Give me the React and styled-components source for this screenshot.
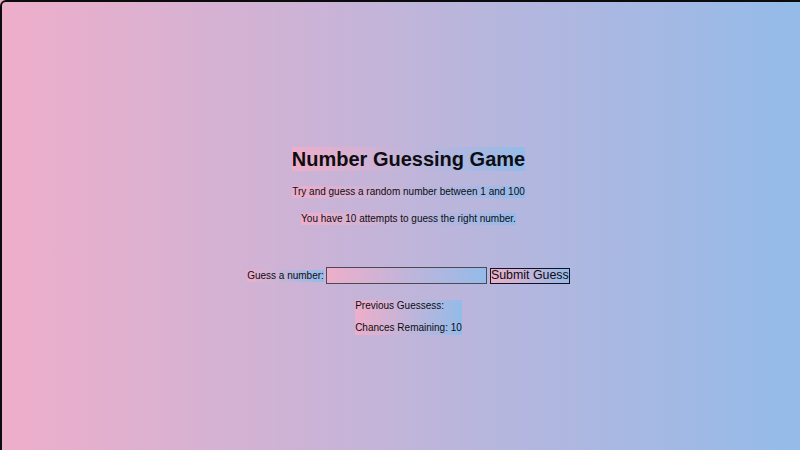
import React from "react";
import styled, { createGlobalStyle, css } from "styled-components";

const sky = css`
  background: linear-gradient(90deg, rgba(238, 174, 202, 1) 0%, rgba(148, 187, 233, 1) 100%);
`;

const GlobalStyle = createGlobalStyle`
  html, body {
    margin: 0;
    padding: 0;
    height: 100%;
    overflow: hidden;
  }
  html {
    background: linear-gradient(90deg, rgba(238, 174, 202, 1) 0%, rgba(148, 187, 233, 1) 100%);
  }
  body {
    font-family: "Liberation Sans", Arial, sans-serif;
    color: #0d0d12;
  }
`;

const Frame = styled.div`
  box-sizing: border-box;
  width: calc(100% + 17px);
  min-height: calc(100vh + 12px);
  border: 2px solid #0b0b0b;
  border-radius: 6px;
`;

const Column = styled.main`
  display: flex;
  flex-direction: column;
  align-items: center;
  padding-top: 145px;
`;

const Title = styled.h1`
  ${sky};
  margin: 0;
  font-size: 20px;
  line-height: 24px;
  font-weight: 700;
`;

const Intro = styled.p`
  ${sky};
  margin: ${(p) => p.$top}px 0 0;
  font-size: 10px;
  line-height: 12px;
`;

const GuessForm = styled.form`
  display: flex;
  align-items: center;
  margin-top: 42px;
`;

const Label = styled.label`
  ${sky};
  font-size: 10px;
  line-height: 12px;
  margin-right: 2px;
`;

const Field = styled.input`
  ${sky};
  box-sizing: border-box;
  width: 161px;
  height: 17px;
  margin: 0 3px 0 0;
  padding: 0 2px;
  border: 1.5px solid #4a4a55;
  font-family: inherit;
  font-size: 10px;
  outline: none;
`;

const SubmitButton = styled.button`
  ${sky};
  box-sizing: border-box;
  width: 80px;
  height: 16px;
  padding: 0;
  border: 1.5px solid #10121c;
  font-family: inherit;
  font-size: 12.4px;
  line-height: 13px;
  color: #0d0d12;
`;

const Results = styled.div`
  ${sky};
  display: flex;
  flex-direction: column;
  gap: 10px;
  margin-top: 16px;
  padding-bottom: 1px;
`;

const ResultLine = styled.p`
  margin: 0;
  font-size: 10px;
  line-height: 12px;
`;

export default function App() {
  return (
    <>
      <GlobalStyle />
      <Frame>
        <Column>
          <Title>Number Guessing Game</Title>
          <Intro $top={15}>Try and guess a random number between 1 and 100</Intro>
          <Intro $top={15}>You have 10 attempts to guess the right number.</Intro>
          <GuessForm onSubmit={(e) => e.preventDefault()}>
            <Label htmlFor="guessField">Guess a number:</Label>
            <Field id="guessField" type="number" />
            <SubmitButton type="submit">Submit Guess</SubmitButton>
          </GuessForm>
          <Results>
            <ResultLine>Previous Guessess:</ResultLine>
            <ResultLine>Chances Remaining: 10</ResultLine>
          </Results>
        </Column>
      </Frame>
    </>
  );
}
